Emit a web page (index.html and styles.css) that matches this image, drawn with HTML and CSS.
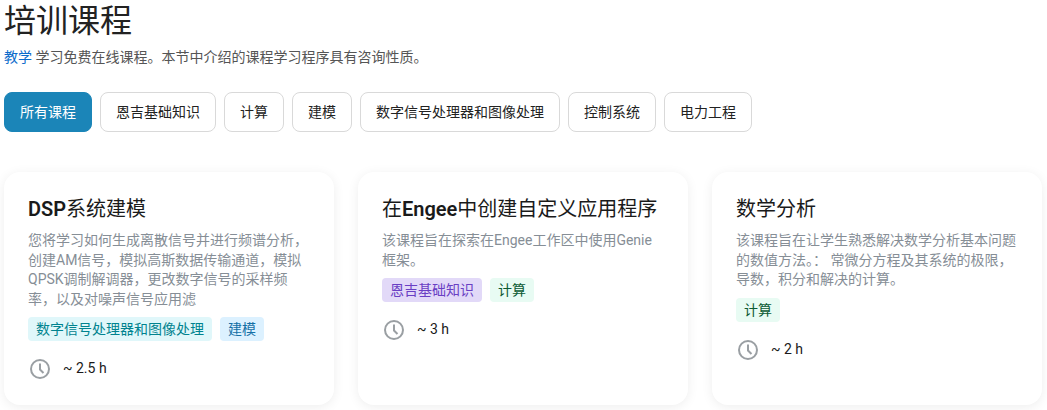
FILE: index.html
```html
<!DOCTYPE html>
<html lang="zh">

<head>
    <meta charset="UTF-8">
    <meta name="viewport" content="width=device-width, initial-scale=1.0">
    <title>培训课程</title>
    <link rel="stylesheet" href="styles.css">
</head>

<body>
    <h1 class="page-title">培训课程</h1>
    <p class="intro"><a href="#">教学</a> 学习免费在线课程。本节中介绍的课程学习程序具有咨询性质。</p>

    <div class="filters">
        <a href="#" class="filter active">所有课程</a>
        <a href="#" class="filter">恩吉基础知识</a>
        <a href="#" class="filter">计算</a>
        <a href="#" class="filter">建模</a>
        <a href="#" class="filter">数字信号处理器和图像处理</a>
        <a href="#" class="filter">控制系统</a>
        <a href="#" class="filter">电力工程</a>
    </div>

    <div class="cards">
        <div class="card">
            <h2><b>DSP</b>系统建模</h2>
            <p class="desc">您将学习如何生成离散信号并进行频谱分析，创建AM信号，模拟高斯数据传输通道，模拟QPSK调制解调器，更改数字信号的采样频率，以及对噪声信号应用滤</p>
            <div class="tags">
                <span class="tag teal">数字信号处理器和图像处理</span>
                <span class="tag blue">建模</span>
            </div>
            <div class="time">
                <svg viewBox="0 0 20 20" width="20" height="20"><circle cx="10" cy="10" r="9"/><path d="M10 4.5V10.5L13.5 14"/></svg>
                <span>~ 2.5 h</span>
            </div>
        </div>
        <div class="card">
            <h2>在<b>Engee</b>中创建自定义应用程序</h2>
            <p class="desc">该课程旨在探索在Engee工作区中使用Genie框架。</p>
            <div class="tags">
                <span class="tag purple">恩吉基础知识</span>
                <span class="tag green">计算</span>
            </div>
            <div class="time">
                <svg viewBox="0 0 20 20" width="20" height="20"><circle cx="10" cy="10" r="9"/><path d="M10 4.5V10.5L13.5 14"/></svg>
                <span>~ 3 h</span>
            </div>
        </div>
        <div class="card">
            <h2>数学分析</h2>
            <p class="desc">该课程旨在让学生熟悉解决数学分析基本问题的数值方法。： 常微分方程及其系统的极限，导数，积分和解决的计算。</p>
            <div class="tags">
                <span class="tag green">计算</span>
            </div>
            <div class="time">
                <svg viewBox="0 0 20 20" width="20" height="20"><circle cx="10" cy="10" r="9"/><path d="M10 4.5V10.5L13.5 14"/></svg>
                <span>~ 2 h</span>
            </div>
        </div>
    </div>
</body>

</html>
```

FILE: styles.css
```css
html,
body {
    height: 410px;
    overflow: hidden;
}

body {
    margin: 0;
    padding: 0 5px 0 4px;
    background-color: #fff;
    font-family: Roboto, "Noto Sans CJK SC", sans-serif;
    font-size: 14px;
    color: #1a1a1a;
}

a {
    text-decoration: none;
}

.page-title {
    margin: 0;
    font-size: 32px;
    font-weight: 400;
    line-height: 42px;
    color: #222;
}

.intro {
    margin: 5px 0 0;
    line-height: 20px;
    font-size: 14px;
    color: #555;
}

.intro a {
    color: #0b6bcb;
}

.filters {
    display: flex;
    gap: 8px;
    margin-top: 25px;
}

.filter {
    display: flex;
    align-items: center;
    height: 40px;
    box-sizing: border-box;
    padding: 0 15px;
    border: 1px solid #d9d9d9;
    border-radius: 8px;
    color: #222;
    line-height: 20px;
}

.filter.active {
    background-color: #1b85b8;
    border-color: #1b85b8;
    color: #fff;
}

.cards {
    display: grid;
    grid-template-columns: repeat(3, 330px);
    gap: 24px;
    margin-top: 40px;
}

.card {
    height: 233px;
    box-sizing: border-box;
    padding: 24px;
    border-radius: 16px;
    background-color: #fff;
    box-shadow: 0 2px 12px rgba(0, 0, 0, .07);
}

.card h2 {
    margin: 0;
    font-size: 20px;
    font-weight: 400;
    line-height: 26px;
    color: #1a1a1a;
}

.card h2 b {
    font-weight: 600;
}

.desc {
    margin: 9px 0 0;
    line-height: 19.6px;
    color: #868e96;
}

.tags {
    display: flex;
    gap: 8px;
    margin-top: 8px;
}

.tag {
    height: 24px;
    padding: 0 8px;
    border-radius: 4px;
    line-height: 24px;
}

.teal {
    background-color: #e0f7fa;
    color: #00838f;
}

.blue {
    background-color: #dcf1ff;
    color: #1570a6;
}

.purple {
    background-color: #e2d9f8;
    color: #6a3fc4;
}

.green {
    background-color: #e8fbf3;
    color: #0b5a33;
}

.time {
    display: flex;
    align-items: center;
    gap: 13px;
    margin-top: 18px;
    padding-left: 2px;
    line-height: 20px;
    color: #1a1a1a;
}

.time svg {
    flex: none;
    fill: none;
    stroke: #9a9fa3;
    stroke-width: 2;
}

.time span {
    margin-top: -2px;
}
```
